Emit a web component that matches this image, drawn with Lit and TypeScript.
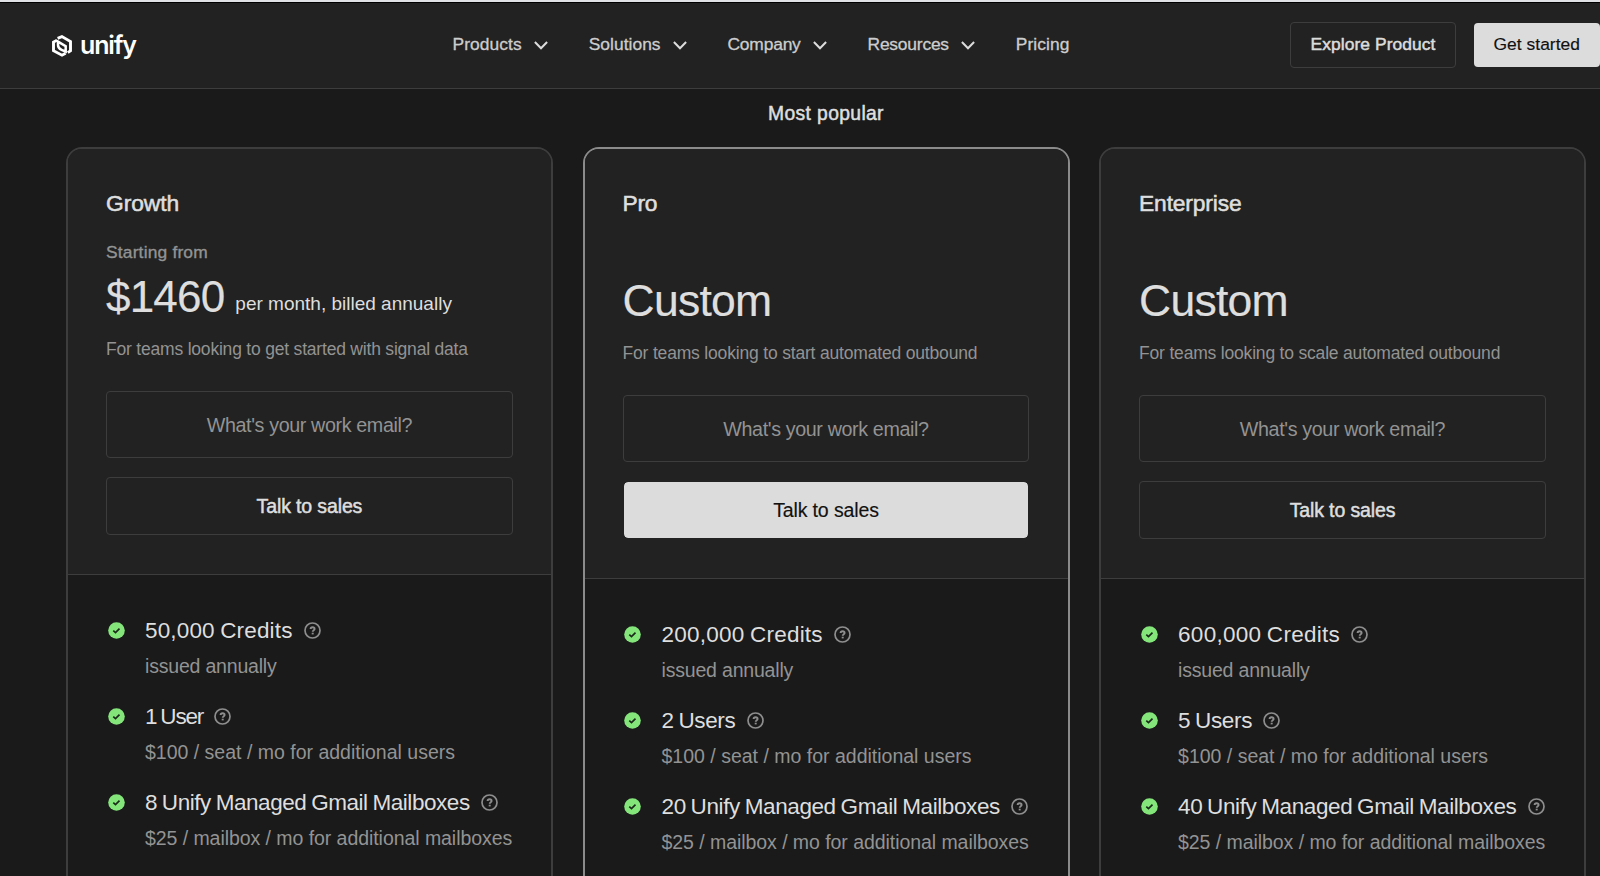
import { LitElement, html, css, svg, nothing } from "lit";
import { customElement, property } from "lit/decorators.js";
import { classMap } from "lit/directives/class-map.js";
import { styleMap } from "lit/directives/style-map.js";

interface Label {
  text: string;
  /** letter-spacing in px */
  track: number;
}

interface Feature {
  title: Label;
  note: Label;
}

interface Plan {
  name: Label;
  prefix?: string;
  price: string;
  period?: string;
  blurb: Label;
  popular?: boolean;
  features: Feature[];
}

const seatNote: Label = { text: "$100 / seat / mo for additional users", track: 0 };
const mailboxNote: Label = { text: "$25 / mailbox / mo for additional mailboxes", track: -0.056 };
const creditNote: Label = { text: "issued annually", track: -0.19 };

const plans: Plan[] = [
  {
    name: { text: "Growth", track: -0.05 },
    prefix: "Starting from",
    price: "$1460",
    period: "per month, billed annually",
    blurb: { text: "For teams looking to get started with signal data", track: -0.2 },
    features: [
      { title: { text: "50,000 Credits", track: 0.16 }, note: creditNote },
      { title: { text: "1 User", track: -1.2 }, note: seatNote },
      { title: { text: "8 Unify Managed Gmail Mailboxes", track: -0.45 }, note: mailboxNote },
    ],
  },
  {
    name: { text: "Pro", track: -0.3 },
    price: "Custom",
    blurb: { text: "For teams looking to start automated outbound", track: -0.18 },
    popular: true,
    features: [
      { title: { text: "200,000 Credits", track: 0.23 }, note: creditNote },
      { title: { text: "2 Users", track: -0.4 }, note: seatNote },
      { title: { text: "20 Unify Managed Gmail Mailboxes", track: -0.4 }, note: mailboxNote },
    ],
  },
  {
    name: { text: "Enterprise", track: -0.15 },
    price: "Custom",
    blurb: { text: "For teams looking to scale automated outbound", track: -0.19 },
    features: [
      { title: { text: "600,000 Credits", track: 0.28 }, note: creditNote },
      { title: { text: "5 Users", track: -0.36 }, note: seatNote },
      { title: { text: "40 Unify Managed Gmail Mailboxes", track: -0.4 }, note: mailboxNote },
    ],
  },
];

const menu: (Label & { open: boolean })[] = [
  { text: "Products", track: 0.08, open: true },
  { text: "Solutions", track: 0.04, open: true },
  { text: "Company", track: -0.18, open: true },
  { text: "Resources", track: -0.2, open: true },
  { text: "Pricing", track: 0.1, open: false },
];

const tracked = (l: Label) => styleMap({ letterSpacing: `${l.track}px` });

const checkIcon = svg`<svg class="check" width="17" height="17" viewBox="0 0 17 17">
  <circle cx="8.5" cy="8.5" r="8.3" fill="#84e57b"/>
  <path d="M5.3 8.6 L7.5 10.6 L11.5 6.6" fill="none" stroke="#1b2a1a" stroke-width="1.7"/>
</svg>`;

const helpIcon = svg`<svg class="help" width="17" height="17" viewBox="0 0 17 17" fill="none" stroke="#8e8e8e">
  <circle cx="8.5" cy="8.5" r="7.5" stroke-width="1.7"/>
  <path d="M6.6 7 C6.6 5.8 7.4 5.2 8.6 5.2 C9.8 5.2 10.6 5.9 10.6 6.9 C10.6 8.2 8.7 8.2 8.7 9.8" stroke-width="1.9"/>
  <path d="M8.7 10.7 V12.4" stroke-width="2"/>
</svg>`;

const chevron = svg`<svg width="14" height="9" viewBox="0 0 14 9" fill="none" stroke="#dcdcdc" stroke-width="2">
  <path d="M0.9 1 L7 7.2 L13.1 1"/>
</svg>`;

@customElement("plan-card")
export class PlanCard extends LitElement {
  @property({ attribute: false }) plan!: Plan;

  static styles = css`
    :host {
      display: block;
      min-width: 0;
    }
    .card {
      box-sizing: border-box;
      height: 780px;
      border: 2px solid #3d3d3d;
      border-radius: 16px;
      overflow: hidden;
      background: #1a1a1a;
    }
    .card.popular {
      border-color: #8b8b8b;
    }
    .top {
      padding: 40px 38.5px 39px 38px;
      background: #222;
      border-bottom: 1px solid #3d3d3d;
    }
    .name {
      font-size: 22.8px;
      line-height: 28px;
      color: #dedede;
      -webkit-text-stroke: 0.55px #dedede;
    }
    .prefix {
      margin-top: 25px;
      height: 20px;
      font-size: 17.4px;
      line-height: 20px;
      letter-spacing: 0.18px;
      color: #939393;
      -webkit-text-stroke: 0.35px #939393;
    }
    .price {
      display: flex;
      align-items: flex-end;
      gap: 11px;
      margin-top: 10px;
      color: #dedede;
      font-size: 44px;
      line-height: 50px;
      letter-spacing: -0.8px;
      -webkit-text-stroke: 0.2px #dedede;
    }
    .price.custom {
      margin-top: 14px;
      font-size: 44.5px;
      letter-spacing: -0.75px;
    }
    .period {
      margin-bottom: 6px;
      font-size: 19px;
      line-height: 24px;
      letter-spacing: 0;
      -webkit-text-stroke: 0;
    }
    .blurb {
      margin-top: 16px;
      font-size: 17.5px;
      line-height: 22px;
      color: #939393;
      white-space: nowrap;
    }
    .email,
    .talk {
      display: flex;
      box-sizing: border-box;
      align-items: center;
      justify-content: center;
      padding-top: 2px;
      border: 1px solid #3d3d3d;
      border-radius: 4px;
    }
    .email {
      margin-top: 31px;
      height: 67px;
      font-size: 19.7px;
      letter-spacing: -0.37px;
      color: #939393;
    }
    .talk {
      margin-top: 19px;
      height: 58px;
      font-size: 19.5px;
      letter-spacing: -0.13px;
      color: #dedede;
      -webkit-text-stroke: 0.5px #dedede;
    }
    .popular .talk {
      border-color: #222;
      border-radius: 5px;
      background: #dcdcdc;
      background-clip: padding-box;
      color: #111;
      -webkit-text-stroke: 0.15px #111;
    }
    .features {
      display: flex;
      flex-direction: column;
      gap: 24.5px;
      padding: 42px 0 0 39.7px;
    }
    .feature {
      display: grid;
      grid-template-columns: 17px auto;
      column-gap: 20.3px;
      row-gap: 9px;
      margin-bottom: 0.3px;
    }
    .check {
      align-self: center;
    }
    .title {
      display: flex;
      align-items: center;
      gap: 11.3px;
      height: 28px;
      font-size: 22.5px;
      line-height: 28px;
      word-spacing: -1px;
      color: #dedede;
      white-space: nowrap;
    }
    .note {
      grid-column: 2;
      height: 24px;
      font-size: 19.5px;
      line-height: 24px;
      color: #939393;
      white-space: nowrap;
    }
  `;

  render() {
    const p = this.plan;
    return html`
      <article class=${classMap({ card: true, popular: !!p.popular })}>
        <div class="top">
          <div class="name" style=${tracked(p.name)}>${p.name.text}</div>
          <div class="prefix">${p.prefix ?? nothing}</div>
          <div class=${classMap({ price: true, custom: !p.period })}>
            <span>${p.price}</span>
            ${p.period ? html`<span class="period">${p.period}</span>` : nothing}
          </div>
          <div class="blurb" style=${tracked(p.blurb)}>${p.blurb.text}</div>
          <div class="email">What's your work email?</div>
          <div class="talk">Talk to sales</div>
        </div>
        <div class="features">
          ${p.features.map(
            (f) => html`<div class="feature">
              ${checkIcon}
              <div class="title"><span style=${tracked(f.title)}>${f.title.text}</span>${helpIcon}</div>
              <div class="note" style=${tracked(f.note)}>${f.note.text}</div>
            </div>`
          )}
        </div>
      </article>
    `;
  }
}

@customElement("app-root")
export class AppRoot extends LitElement {
  static styles = css`
    :host {
      display: block;
      box-sizing: border-box;
      width: 1600px;
      height: 876px;
      overflow: hidden;
      background: #1a1a1a;
      font-family: "Liberation Sans", Arial, sans-serif;
    }
    .edge {
      height: 2px;
      background: #dfe1e5;
      border-bottom: 1px solid #000;
    }
    header {
      display: flex;
      align-items: center;
      box-sizing: border-box;
      height: 86px;
      padding: 0 0 1px 52px;
      background: #222;
      border-bottom: 1px solid #3d3d3d;
    }
    .logo {
      display: flex;
      align-items: center;
      gap: 8px;
      flex: 0 0 400.5px;
    }
    .logo svg {
      margin-top: 2px;
    }
    .word {
      padding-bottom: 1px;
      font: 600 25px/30px Inter, sans-serif;
      letter-spacing: -1.15px;
      color: #fff;
    }
    nav {
      display: flex;
      gap: 40.3px;
      padding-bottom: 2px;
      font-size: 17.4px;
      line-height: 20px;
      color: #cdcdcd;
      -webkit-text-stroke: 0.3px #cdcdcd;
    }
    .item {
      display: flex;
      align-items: center;
      gap: 12.6px;
    }
    .item svg {
      margin-top: 3px;
    }
    .actions {
      display: flex;
      align-items: center;
      gap: 17.5px;
      margin-left: auto;
      font-size: 17.4px;
    }
    .explore,
    .start {
      display: flex;
      box-sizing: border-box;
      align-items: center;
      justify-content: center;
      padding-bottom: 2px;
      border-radius: 4px;
    }
    .explore {
      width: 166px;
      height: 46px;
      border: 1px solid #3d3d3d;
      letter-spacing: 0.08px;
      color: #dcdcdc;
      -webkit-text-stroke: 0.5px #dcdcdc;
    }
    .start {
      width: 126.5px;
      height: 44px;
      background: #dcdcdc;
      letter-spacing: 0.05px;
      color: #111;
      -webkit-text-stroke: 0.15px #111;
    }
    .badge {
      margin: 12.6px 0 21.4px;
      padding-left: 52px;
      text-align: center;
      font-size: 19.3px;
      line-height: 24px;
      letter-spacing: 0.36px;
      color: #dedede;
      -webkit-text-stroke: 0.5px #dedede;
    }
    .plans {
      display: grid;
      grid-template-columns: repeat(3, 1fr);
      gap: 29.2px;
      padding: 0 13.6px 0 66px;
    }
  `;

  render() {
    return html`
      <div class="edge"></div>
      <header>
        <div class="logo">
          <svg width="20" height="22" viewBox="0 0 20 22" fill="none" stroke="#fff" stroke-width="2.9">
            <path d="M5.6 3.3 L9.9 1.6 L18.5 6.5 V15.8 L15.8 17.6" />
            <path d="M5 5.2 L1.5 7.1 V15.7 L10 20.2 L13.6 18.2" />
            <path d="M6 6.6 L13.7 11.2 V16.7 L9.6 14.9 C6.8 13.6 6 12.4 6 10 Z" stroke-width="2.5" />
          </svg>
          <span class="word">unify</span>
        </div>
        <nav>
          ${menu.map(
            (m) => html`<div class="item"><span style=${tracked(m)}>${m.text}</span>${m.open ? chevron : nothing}</div>`
          )}
        </nav>
        <div class="actions">
          <div class="explore">Explore Product</div>
          <div class="start">Get started</div>
        </div>
      </header>
      <div class="badge">Most popular</div>
      <main class="plans">${plans.map((p) => html`<plan-card .plan=${p}></plan-card>`)}</main>
    `;
  }
}
